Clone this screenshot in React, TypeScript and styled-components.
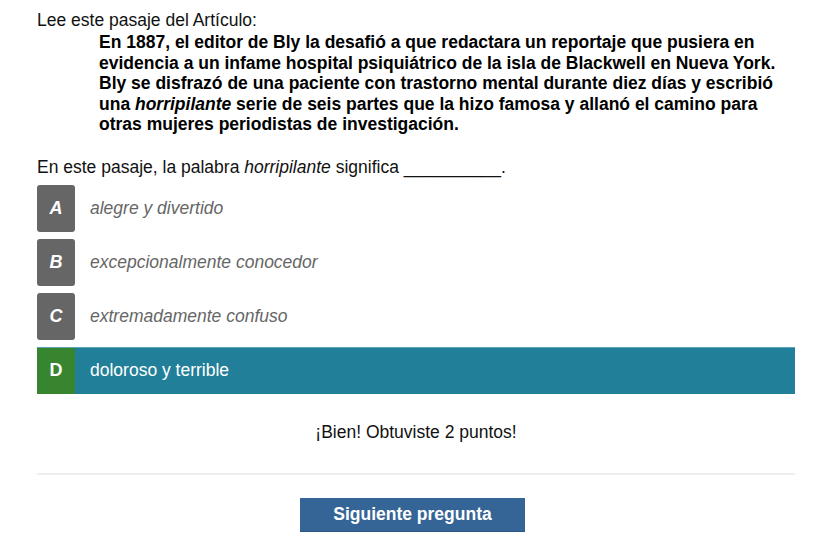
import styled, { createGlobalStyle } from "styled-components";

const GlobalStyle = createGlobalStyle`
  body {
    margin: 0;
    background: #ffffff;
    font-family: "Liberation Sans", Arial, sans-serif;
    color: #000000;
  }
`;

type Option = {
  letter: string;
  text: string;
};

const options: Option[] = [
  { letter: "A", text: "alegre y divertido" },
  { letter: "B", text: "excepcionalmente conocedor" },
  { letter: "C", text: "extremadamente confuso" },
  { letter: "D", text: "doloroso y terrible" },
];

const selected = "D";

const App = () => {
  return (
    <Wrapper>
      <GlobalStyle />
      <Intro>Lee este pasaje del Artículo:</Intro>
      <Passage>
        En 1887, el editor de Bly la desafió a que redactara un reportaje que
        pusiera en evidencia a un infame hospital psiquiátrico de la isla de
        Blackwell en Nueva York. Bly se disfrazó de una paciente con trastorno
        mental durante diez días y escribió una <em>horripilante</em> serie de
        seis partes que la hizo famosa y allanó el camino para otras mujeres
        periodistas de investigación.
      </Passage>
      <Question>
        En este pasaje, la palabra <em>horripilante</em> significa __________.
      </Question>
      <Options>
        {options.map(({ letter, text }) => {
          const active = letter === selected;
          return (
            <Row key={letter} $active={active}>
              <Letter $active={active}>{letter}</Letter>
              <OptionText $active={active}>{text}</OptionText>
            </Row>
          );
        })}
      </Options>
      <Feedback>¡Bien! Obtuviste 2 puntos!</Feedback>
      <Divider />
      <Actions>
        <NextButton>Siguiente pregunta</NextButton>
      </Actions>
    </Wrapper>
  );
};

export default App;

const Wrapper = styled.main`
  width: 758px;
  padding: 10px 0 0 37px;
  font-size: 17.5px;
`;

const Intro = styled.p`
  margin: 0;
  line-height: 20px;
  color: #111111;
`;

const Passage = styled.blockquote`
  margin: 2px 0 0 0;
  padding: 0 10px 0 62px;
  font-size: 17.5px;
  font-weight: bold;
  line-height: 20.5px;
  color: #000000;

  em {
    font-style: italic;
  }
`;

const Question = styled.p`
  margin: 22px 0 0 0;
  line-height: 20px;
  color: #111111;
`;

const Options = styled.div`
  margin-top: 8px;
  display: flex;
  flex-direction: column;
  gap: 7px;
`;

const Row = styled.div<{ $active: boolean }>`
  display: flex;
  align-items: center;
  height: 47px;
  background: ${(p) => (p.$active ? "#227f99" : "transparent")};
  border-top: ${(p) => (p.$active ? "1px solid #5fa3b8" : "none")};
  box-sizing: border-box;
`;

const Letter = styled.div<{ $active: boolean }>`
  display: flex;
  align-items: center;
  justify-content: center;
  width: 38px;
  align-self: stretch;
  border-radius: ${(p) => (p.$active ? "0" : "3px")};
  background: ${(p) => (p.$active ? "#37852f" : "#666666")};
  color: #ffffff;
  font-weight: bold;
  font-style: ${(p) => (p.$active ? "normal" : "italic")};
  font-size: 18px;
`;

const OptionText = styled.span<{ $active: boolean }>`
  margin-left: 15px;
  color: ${(p) => (p.$active ? "#ffffff" : "#666666")};
  font-style: ${(p) => (p.$active ? "normal" : "italic")};
`;

const Feedback = styled.p`
  margin: 28px 0 0 0;
  line-height: 20px;
  text-align: center;
  color: #111111;
`;

const Divider = styled.hr`
  margin: 31px 0 0 0;
  border: none;
  height: 2px;
  background: #eeeeee;
`;

const Actions = styled.div`
  display: flex;
  justify-content: center;
  padding-right: 7px;
  margin-top: 23px;
`;

const NextButton = styled.button`
  width: 225px;
  height: 34px;
  padding: 1px 0 0 0;
  border: none;
  border-bottom: 1px solid #2c5785;
  background: #356597;
  color: #ffffff;
  font-family: "Liberation Sans", Arial, sans-serif;
  font-size: 17.5px;
  font-weight: bold;
  cursor: pointer;
`;
